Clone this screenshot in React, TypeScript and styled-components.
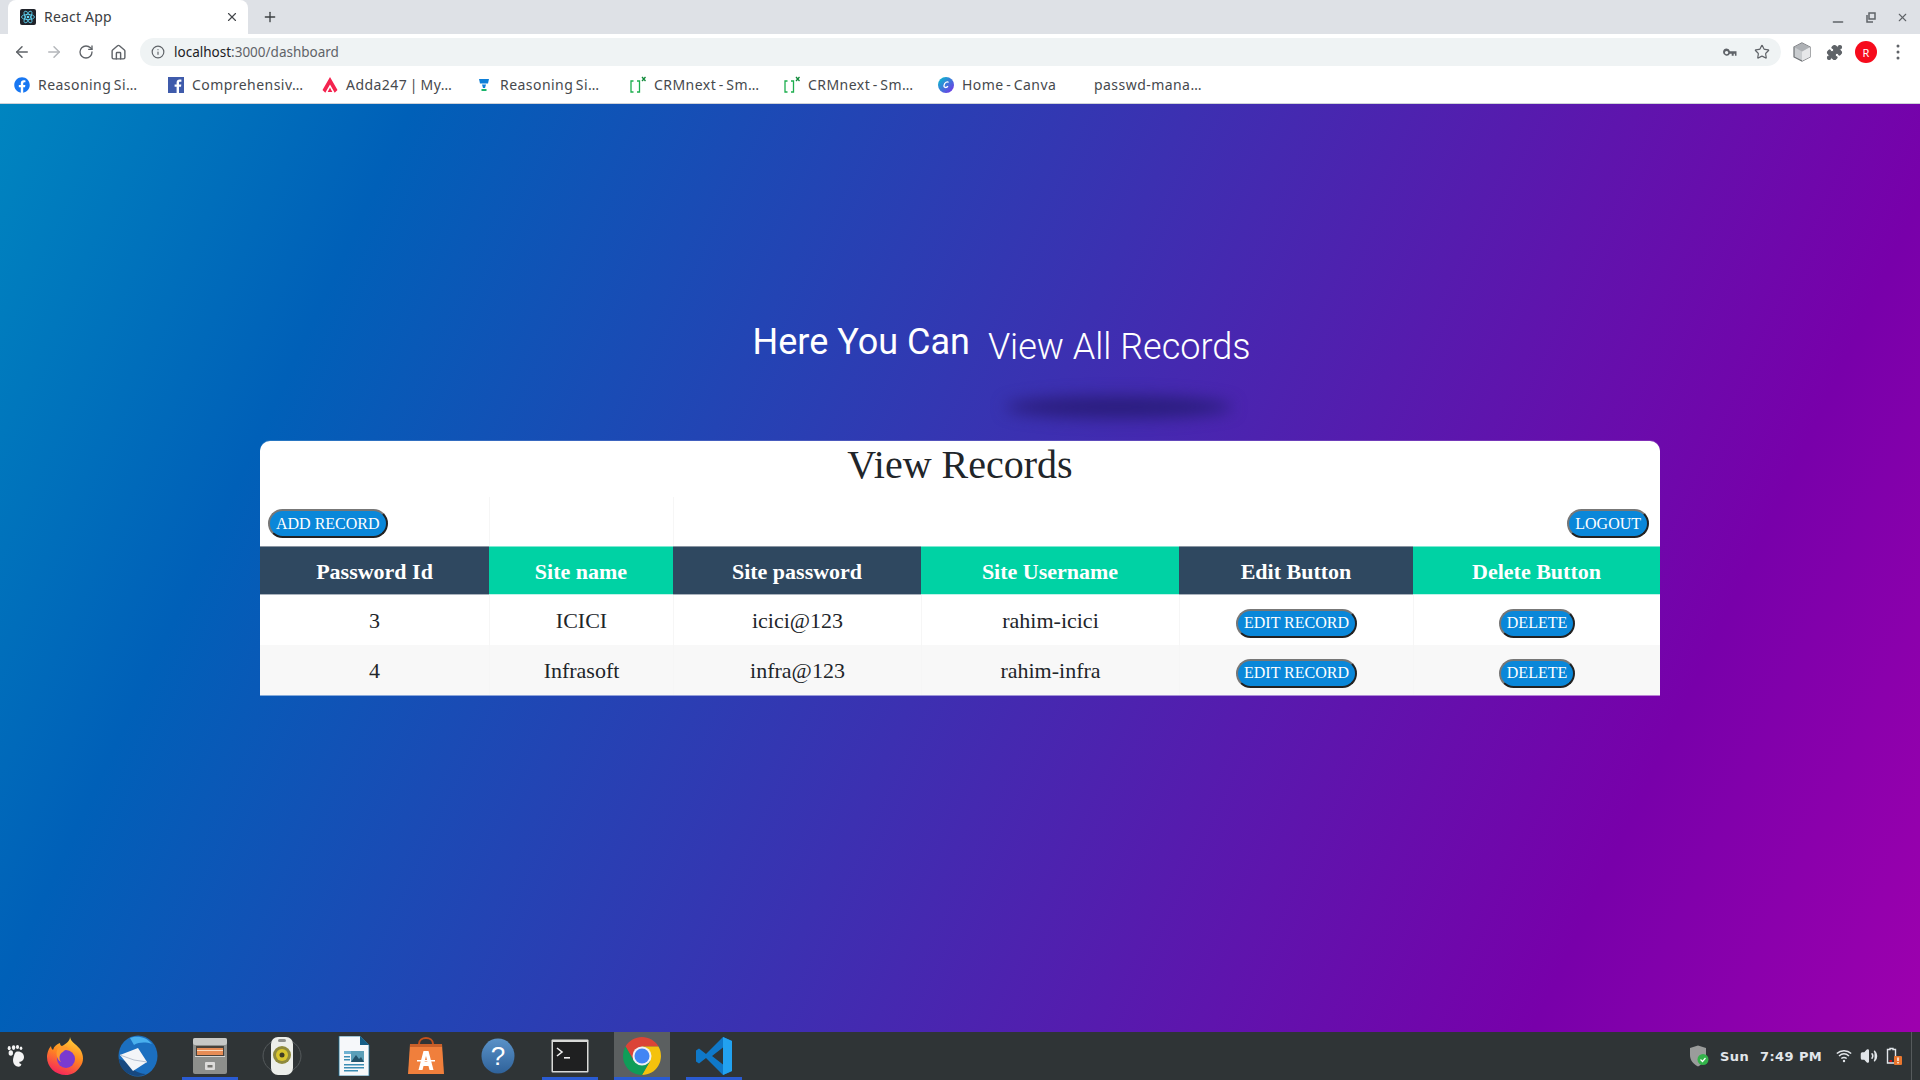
import React from 'react';
import styled, { createGlobalStyle } from 'styled-components';
import { ArrowLeft, ArrowRight, RotateCw, Home, Info, Star, Plus, X, Minus, Puzzle, Volume2 } from 'lucide-react';
import { FaFacebook } from 'react-icons/fa';

const GlobalStyle = createGlobalStyle`
    html, body {
        margin: 0;
        height: 100%;
        overflow: hidden;
    }
    #root {
        height: 100%;
    }
`;

const Screen = styled.div`
    display: flex;
    flex-direction: column;
    height: 1080px;
    font-family: "Liberation Serif", serif;
`;

// <BROWSER>
const TabStrip = styled.div`
    display: flex;
    align-items: flex-end;
    height: 34px;
    padding-left: 8px;
    background: #dee1e6;
    font-family: "Noto Sans", sans-serif;
`;

const Tab = styled.div`
    display: flex;
    align-items: center;
    gap: 8px;
    width: 240px;
    height: 34px;
    box-sizing: border-box;
    padding: 0 9px 0 12px;
    background: #fff;
    border-radius: 8px 8px 0 0;
    color: #3c4043;
    font-size: 14px;
    letter-spacing: 0.2px;

    & > span {
        flex: 1;
        padding-bottom: 2px;
    }
`;

const NewTab = styled.div`
    display: flex;
    justify-content: center;
    width: 28px;
    height: 34px;
    align-items: center;
    margin-left: 8px;
    color: #3c4043;
`;

const WindowControls = styled.div`
    display: flex;
    align-items: center;
    gap: 20px;
    height: 34px;
    margin-left: auto;
    padding-right: 11px;
    color: #5f6368;
`;

const Toolbar = styled.div`
    display: flex;
    align-items: flex-end;
    height: 32px;
    padding: 0 6px;
    background: #fff;
`;

const ToolButton = styled.div<{ $muted?: boolean }>`
    display: flex;
    align-items: center;
    justify-content: center;
    flex: none;
    width: 32px;
    height: 28px;
    color: ${({ $muted }) => ($muted ? '#b4b7bb' : '#5f6368')};
`;

const Omnibox = styled.div`
    display: flex;
    align-items: center;
    flex: 1;
    height: 28px;
    margin: 0 5px 0 6px;
    padding: 0 11px 0 11px;
    background: #eff3f4;
    border-radius: 14px;
    color: #5f6368;
`;

const Address = styled.div`
    flex: 1;
    margin-left: 9px;
    font: 13.5px "Noto Sans", sans-serif;
    color: #5f6368;

    & > b {
        font-weight: 400;
        color: #202124;
    }
`;

const Avatar = styled.div`
    display: flex;
    align-items: center;
    justify-content: center;
    width: 22px;
    height: 22px;
    border-radius: 50%;
    background: #f60b1c;
    color: #fff;
    font: 11px "Noto Sans", sans-serif;
`;

const Bookmarks = styled.div`
    display: flex;
    align-items: center;
    height: 37px;
    padding-left: 14px;
    background: #fff;
    border-bottom: 1px solid #cfd2d8;
    box-sizing: content-box;
    font: 14px "Noto Sans", sans-serif;
    letter-spacing: 0.45px;
    word-spacing: -1.5px;
    color: #46494d;
`;

const Bookmark = styled.div<{ $width?: number }>`
    display: flex;
    align-items: center;
    gap: 8px;
    flex: none;
    width: ${({ $width }) => $width ?? 154}px;
    white-space: nowrap;
`;
// </BROWSER>

// <PAGE>
const Page = styled.main`
    flex: 1;
    display: flex;
    flex-direction: column;
    min-height: 0;
    background: linear-gradient(115deg, #0085c0 0%, #0060b8 17.6%, #7800aa 83.5%, #9e00ae 100%);
`;

const Hero = styled.div`
    display: flex;
    align-items: flex-start;
    justify-content: center;
    gap: 18px;
    padding: 217px 0 0 83px;
    height: 337px;
    box-sizing: border-box;
    font-family: Roboto, sans-serif;
    font-size: 36px;
    line-height: 42px;
    color: #fff;
`;

const HeroLead = styled.div`
    font-weight: 400;
`;

const HeroTyped = styled.div`
    display: flex;
    flex-direction: column;
    align-items: center;
    padding-top: 5px;
    font-weight: 300;
`;

const HeroShadow = styled.div`
    width: 226px;
    height: 22px;
    margin-top: 28px;
    border-radius: 50%;
    background: #2a1d7c;
    filter: blur(8px);
`;

const Card = styled.section`
    align-self: center;
    width: 1400px;
    background: #fff;
    border-radius: 10px 10px 0 0;
    box-shadow: 0 1px 0 rgba(255, 255, 255, 0.5), 0 -1px 0 rgba(255, 255, 255, 0.15);
`;

const CardTitle = styled.h2`
    margin: 0 0 8px;
    font-size: 40px;
    font-weight: 400;
    line-height: 48px;
    text-align: center;
    color: #212529;
`;

const Table = styled.table`
    width: 100%;
    table-layout: fixed;
    border-collapse: separate;
    border-spacing: 0;
    font-size: 22px;
    line-height: 33px;
    color: #212529;
`;

const Column = styled.col<{ $width: number }>`
    width: ${({ $width }) => $width}px;
`;

const ActionCell = styled.td<{ $right?: boolean }>`
    height: 49px;
    box-sizing: border-box;
    padding: 0 ${({ $right }) => ($right ? '11px' : '8px')};
    text-align: ${({ $right }) => ($right ? 'right' : 'left')};
    vertical-align: middle;
    border-left: 1px solid #f6f6f6;

    &:first-child {
        border-left: 0;
    }

    & > button {
        top: 0;
    }
`;

const HeadCell = styled.th<{ $green?: boolean }>`
    height: 49px;
    box-sizing: border-box;
    padding: 1px 8px 0;
    font-weight: 700;
    color: #fff;
    background: ${({ $green }) => ($green ? '#00d2a4' : '#2f4860')};
    border-top: 1px solid ${({ $green }) => ($green ? '#7fe8d1' : '#8a95a2')};
    border-bottom: 1px solid ${({ $green }) => ($green ? '#c0f3e8' : '#aab3bd')};
`;

const Row = styled.tr<{ $shaded?: boolean }>`
    background: ${({ $shaded }) => ($shaded ? '#f8f8f8' : '#fff')};
`;

const Cell = styled.td`
    height: 50px;
    box-sizing: border-box;
    padding: 0 8px;
    text-align: center;
    vertical-align: middle;
    border-left: 1px solid #f6f6f6;

    &:first-child {
        border-left: 0;
    }
`;

const PillButton = styled.button`
    position: relative;
    top: 1px;
    height: 29px;
    box-sizing: border-box;
    padding: 0 6px;
    border: 2px solid;
    border-color: #777 #222 #222 #777;
    border-radius: 15px;
    background: #0a87d9;
    color: #fff;
    font-family: "Liberation Serif", serif;
    font-size: 16px;
    line-height: 24px;
    vertical-align: middle;
`;
// </PAGE>

// <DOCK>
const Taskbar = styled.footer`
    display: flex;
    align-items: stretch;
    flex: none;
    height: 48px;
    background: #2f3436;
    color: #e2e6ea;
`;

const Foot = styled.div`
    display: flex;
    align-items: center;
    justify-content: center;
    flex: none;
    width: 32px;
    margin-right: -2px;
`;

const DockSlot = styled.div`
    display: flex;
    justify-content: center;
    flex: none;
    width: 72px;
`;

const DockButton = styled.div<{ $active?: boolean; $running?: boolean }>`
    display: flex;
    align-items: center;
    justify-content: center;
    width: 56px;
    box-sizing: border-box;
    background: ${({ $active }) => ($active ? '#5b5f60' : 'transparent')};
    border-bottom: 3px solid ${({ $running }) => ($running ? '#2a5bd2' : 'transparent')};
    padding-top: 3px;
`;

const Tray = styled.div`
    display: flex;
    align-items: center;
    margin-left: auto;
    width: 231px;
    box-sizing: border-box;
    padding-left: 8px;
    border-right: 1px solid #565a5c;
    margin-right: 8px;
    font: 700 13px "DejaVu Sans", sans-serif;
    letter-spacing: 0.4px;
`;

const TrayText = styled.span<{ $gap: number }>`
    margin-left: ${({ $gap }) => $gap}px;
    white-space: nowrap;
`;

const TrayIcon = styled.div<{ $gap: number }>`
    display: flex;
    margin-left: ${({ $gap }) => $gap}px;
`;
// </DOCK>

const ReactFavicon = () => (
    <svg width="16" height="16" viewBox="0 0 16 16">
        <rect width="16" height="16" rx="2" fill="#20232a" />
        <g fill="none" stroke="#61dafb" strokeWidth="0.8">
            <ellipse cx="8" cy="8" rx="6.5" ry="2.6" />
            <ellipse cx="8" cy="8" rx="6.5" ry="2.6" transform="rotate(60 8 8)" />
            <ellipse cx="8" cy="8" rx="6.5" ry="2.6" transform="rotate(120 8 8)" />
        </g>
        <circle cx="8" cy="8" r="1.3" fill="#61dafb" />
    </svg>
);

const KeyIcon = () => (
    <svg width="14" height="9" viewBox="0 0 14 9" fill="#5f6368">
        <path fillRule="evenodd" d="M3.600 0.500a3.600 3.600 0 1 0 3.300 5.200h1.800v2h2v-2h1.200v2h1.600V3.300H6.900a3.600 3.600 0 0 0-3.300-2.800zM3.600 2.900a1.700 1.700 0 1 1 0 3.400a1.700 1.700 0 0 1 0-3.400z" />
    </svg>
);

const ExtensionCube = () => (
    <svg width="18" height="20" viewBox="0 0 18 20">
        <path d="M9 1l8 4v10l-8 4-8-4V5z" fill="#c9cccf" stroke="#6d7074" strokeWidth="1.200" />
        <path d="M9 9.500V19l8-4V5z" fill="#e6e7e9" />
        <path d="M9 9.500L1 5l8-4 8 4z" fill="#aeb1b5" />
    </svg>
);

const RestoreIcon = () => (
    <svg width="10" height="11" viewBox="0 0 10 11" fill="none" stroke="#5f6368" strokeWidth="1.500">
        <path d="M3 1h6v6H3z" />
        <path d="M1 3v7h6" />
    </svg>
);

const Dots = () => (
    <svg width="4" height="16" viewBox="0 0 4 16" fill="#5f6368">
        <circle cx="2" cy="2" r="1.500" />
        <circle cx="2" cy="8" r="1.500" />
        <circle cx="2" cy="14" r="1.500" />
    </svg>
);

const FacebookSquare = () => (
    <svg width="16" height="16" viewBox="0 0 16 16">
        <rect width="16" height="16" fill="#3f5bab" />
        <path d="M11 16V9.800h2l.3-2.400H11V6c0-.7.2-1.200 1.200-1.200h1.200V2.600c-.4 0-1-.1-1.800-.1-1.800 0-3 1.100-3 3.100v1.800h-2v2.400h2V16z" fill="#fff" />
    </svg>
);

const AddaIcon = () => (
    <svg width="16" height="16" viewBox="0 0 16 16" fill="#f4234f">
        <path d="M8 0l7.500 13-2.800 2.800L8 7.500 3.300 15.800 0.500 13z" />
        <path d="M8 10.500l2.300 4.500H5.700z" />
    </svg>
);

const TestIcon = () => (
    <svg width="16" height="16" viewBox="0 0 16 16">
        <path d="M3 2h10l-1 4.500H4z" fill="#0e7fd8" />
        <path d="M6 7.500h4L9 11H7z" fill="#0e7fd8" />
        <rect x="5.500" y="12" width="5" height="2" fill="#19b46a" />
    </svg>
);

const CrmIcon = () => (
    <svg width="16" height="18" viewBox="0 0 16 18" fill="none" stroke="#1cae4e" strokeWidth="1.300">
        <path d="M3.500 5H1v11h2.500" />
        <path d="M7 5h2.500v11H7" />
        <path d="M12 1l3.500 4M15.500 1L12 5" stroke="#108a3a" />
    </svg>
);

const CanvaIcon = () => (
    <svg width="16" height="16" viewBox="0 0 16 16">
        <defs>
            <linearGradient id="canva" x1="0" y1="0" x2="1" y2="1">
                <stop offset="0" stopColor="#00c4cc" />
                <stop offset="1" stopColor="#7d2ae8" />
            </linearGradient>
        </defs>
        <circle cx="8" cy="8" r="8" fill="url(#canva)" />
        <path d="M10.500 5.500C9.500 4 6.500 5.500 6 8.500c-.3 2.500 2.500 2.500 4 .8" fill="none" stroke="#fff" strokeWidth="1.300" />
    </svg>
);

const GnomeFoot = () => (
    <svg width="18" height="24" viewBox="0 0 18 24" fill="#f4f4f4">
        <path d="M10 7.500c4-.5 7 2 7 5.500 0 3-2.200 4.800-4.500 4.800-.6 1.500.7 2.200 1.800 2.200.3 2-2.300 3.500-4.800 2.300-3.500-1.700-4-6-3-9 .7-2.500 1.500-5.500 3.500-5.800z" />
        <ellipse cx="3.800" cy="9" rx="2.200" ry="2.800" />
        <ellipse cx="2.200" cy="4.200" rx="1.500" ry="2.100" />
        <ellipse cx="6.600" cy="3.600" rx="1.700" ry="2.400" />
        <ellipse cx="10.500" cy="3" rx="1.600" ry="2.100" />
        <ellipse cx="14" cy="4.300" rx="1.300" ry="1.700" />
    </svg>
);

const Firefox = () => (
    <svg width="40" height="40" viewBox="0 0 40 40">
        <defs>
            <linearGradient id="fx" x1="0.7" y1="0" x2="0.3" y2="1">
                <stop offset="0" stopColor="#ffd33d" />
                <stop offset="0.45" stopColor="#ff8a1f" />
                <stop offset="1" stopColor="#f5215e" />
            </linearGradient>
        </defs>
        <path d="M24 1c1 5 5 6 10 12 4 6 4 13 0 18-4 6-9 8-14 8C9 39 1 31 1 21c0-4 2-9 4-11 0 2 1 3 2 4 1-4 4-6 7-7 0 2 1 3 2 3 4-2 8-5 8-9z" fill="url(#fx)" />
        <circle cx="20" cy="23" r="9" fill="#7a3ad0" />
        <path d="M12 12c4-3 9-2 11 1-3 0-5 1-6 3-3 1-5 6-2 10-4-2-6-9-3-14z" fill="#ff9a2e" />
    </svg>
);

const Thunderbird = () => (
    <svg width="40" height="42" viewBox="0 0 40 42">
        <ellipse cx="20" cy="21" rx="19.500" ry="20.500" fill="#1b6fc0" />
        <path d="M1 24c0 9 8 17 19 17 3 0 6-.7 8-2-8 0-15-5-18-12z" fill="#17487f" />
        <path d="M12 3c7-3 17-1 22 6-6-2-13-2-18 1z" fill="#49b0ee" />
        <path d="M2 20l18-7 9 14-14 9z" fill="#f3f5f8" />
        <path d="M2 20l14 5 13 2" fill="none" stroke="#b7c1cf" strokeWidth="1" />
    </svg>
);

const FileCabinet = () => (
    <svg width="36" height="38" viewBox="0 0 36 38">
        <rect x="1" y="1" width="34" height="36" rx="2" fill="#8d8f8c" />
        <rect x="1" y="1" width="34" height="7" rx="2" fill="#c7c8c6" />
        <rect x="4" y="9" width="28" height="10" fill="#47423c" />
        <rect x="5" y="11" width="26" height="7" fill="#e68c55" />
        <rect x="5" y="13" width="26" height="1" fill="#f8d9bd" />
        <rect x="3" y="19" width="30" height="1" fill="#d8d8d6" />
        <rect x="13" y="25" width="10" height="8" rx="1" fill="#dcdcda" />
        <rect x="15.500" y="28" width="5" height="2.500" fill="#74746f" />
    </svg>
);

const Speaker = () => (
    <svg width="40" height="40" viewBox="0 0 40 40">
        <ellipse cx="20" cy="20" rx="19" ry="17" fill="none" stroke="#555a5c" strokeWidth="1" />
        <rect x="9" y="1" width="22" height="38" rx="7" fill="#eceeea" />
        <circle cx="20" cy="19" r="9" fill="#8f8a3c" />
        <circle cx="20" cy="19" r="6" fill="#d8c52e" />
        <circle cx="20" cy="19" r="2.500" fill="#3f3d24" />
        <rect x="16" y="3" width="8" height="3" rx="1.500" fill="#8d8f8c" />
    </svg>
);

const WriterDoc = () => (
    <svg width="32" height="40" viewBox="0 0 32 40">
        <path d="M1 0h21l9 9v31H1z" fill="#f6f8fa" stroke="#1c6e96" strokeWidth="0.800" />
        <path d="M22 0l9 9h-9z" fill="#155e86" />
        <rect x="6" y="15" width="20" height="3" fill="#6fb2d2" />
        <rect x="13" y="15" width="13" height="11" fill="#5a9fb8" />
        <path d="M13 26l5-7 3 4 2-2 3 5z" fill="#23536a" />
        <rect x="6" y="20" width="6" height="1.500" fill="#3a8db4" />
        <rect x="6" y="23" width="6" height="1.500" fill="#3a8db4" />
        <rect x="6" y="28" width="20" height="1.500" fill="#3a8db4" />
        <rect x="6" y="31" width="20" height="1.500" fill="#3a8db4" />
        <rect x="6" y="34" width="14" height="1.500" fill="#3a8db4" />
    </svg>
);

const SoftwareBag = () => (
    <svg width="36" height="38" viewBox="0 0 36 38">
        <path d="M11 7c0-8 14-8 14 0" fill="none" stroke="#c4501c" strokeWidth="2" />
        <path d="M2 7h32l2 30H0z" fill="#f07f3c" />
        <rect x="2" y="7" width="32" height="3" fill="#c9602a" />
        <path d="M15.500 14h5l5 19h-4l-1-4h-5l-1 4h-4zM16.500 25h3l-1.500-6z" fill="#fff" fillRule="evenodd" />
        <rect x="9" y="23" width="18" height="1.500" fill="#fff" />
    </svg>
);

const HelpBubble = () => (
    <svg width="34" height="36" viewBox="0 0 34 36">
        <defs>
            <linearGradient id="help" x1="0" y1="0" x2="0" y2="1">
                <stop offset="0" stopColor="#5a92c8" />
                <stop offset="1" stopColor="#2f629a" />
            </linearGradient>
        </defs>
        <ellipse cx="17" cy="18" rx="16.500" ry="17.500" fill="url(#help)" />
        <text x="17" y="27" textAnchor="middle" fill="#fff" fontFamily="'Liberation Sans', sans-serif" fontWeight="400" fontSize="26">?</text>
    </svg>
);

const TerminalIcon = () => (
    <svg width="38" height="34" viewBox="0 0 38 34">
        <rect x="0.500" y="0.500" width="37" height="33" rx="1" fill="#d9dad8" />
        <rect x="2" y="3" width="34" height="29" fill="#1f2021" />
        <path d="M6 9l5 4-5 4" fill="none" stroke="#f2f2f2" strokeWidth="1.600" />
        <rect x="13" y="18" width="6" height="1.600" fill="#f2f2f2" />
    </svg>
);

const ChromeLogo = () => (
    <svg width="40" height="40" viewBox="0 0 40 40">
        <path d="M20 10.500L36.450 10.500A19 19 0 0 0 3.550 10.500L11.770 24.750Z" fill="#db4437" />
        <path d="M28.230 24.750L20 39A19 19 0 0 0 36.450 10.500L20 10.500Z" fill="#f4c20d" />
        <path d="M11.770 24.750L3.550 10.500A19 19 0 0 0 20 39L28.230 24.750Z" fill="#0f9d58" />
        <circle cx="20" cy="20" r="9.500" fill="#f1f1f1" />
        <circle cx="20" cy="20" r="7.500" fill="#4285f4" />
    </svg>
);

const VsCode = () => (
    <svg width="38" height="40" viewBox="0 0 38 40">
        <path d="M28 1L11 18 4 12.500 1 14.500v11L4 27.500 11 22 28 39l9-4V5zM28 11.500v17L17 20z" fill="#0f78c8" fillRule="evenodd" />
        <path d="M28 1l9 4v30l-9 4z" fill="#22a2f0" />
    </svg>
);

const Shield = () => (
    <svg width="20" height="22" viewBox="0 0 20 22">
        <path d="M9 0.500l8 2.500v7c0 5-3 9-8 11.500C4 19 1 15 1 10V3z" fill="#9a9c9b" />
        <circle cx="14" cy="14.500" r="5.500" fill="#33b34a" />
        <path d="M11.500 14.500l2 2 3-3.500" fill="none" stroke="#fff" strokeWidth="1.200" />
    </svg>
);

const Wifi = () => (
    <svg width="16" height="14" viewBox="0 0 16 14" fill="none" stroke="#e2e6ea" strokeWidth="1.500">
        <path d="M0.800 4.500c4-3.600 10.400-3.600 14.400 0" />
        <path d="M3 7c3-2.600 7-2.600 10 0" />
        <path d="M5.300 9.500c1.600-1.300 3.800-1.300 5.400 0" />
        <circle cx="8" cy="12" r="1.200" fill="#e2e6ea" stroke="none" />
    </svg>
);

const Battery = () => (
    <svg width="16" height="18" viewBox="0 0 16 18">
        <path d="M4 1.500h3v1h2.500v13.500H1.500V2.500H4z" fill="none" stroke="#e2e6ea" strokeWidth="1.400" />
        <rect x="3.500" y="13" width="2.500" height="2" fill="#c11" />
        <rect x="8" y="9" width="8" height="9" rx="1" fill="#e9762e" />
        <rect x="11.300" y="10.500" width="1.400" height="3.500" fill="#fff" />
        <rect x="11.300" y="15" width="1.400" height="1.400" fill="#fff" />
    </svg>
);

const bookmarks = [
    { icon: <FaFacebook size={16} color="#1877f2" />, label: 'Reasoning Si…' },
    { icon: <FacebookSquare />, label: 'Comprehensiv…' },
    { icon: <AddaIcon />, label: 'Adda247 | My…' },
    { icon: <TestIcon />, label: 'Reasoning Si…' },
    { icon: <CrmIcon />, label: 'CRMnext - Sm…' },
    { icon: <CrmIcon />, label: 'CRMnext - Sm…' },
    { icon: <CanvaIcon />, label: 'Home - Canva', width: 156 },
    { label: 'passwd-mana…' },
];

const dock = [
    { icon: <Firefox /> },
    { icon: <Thunderbird /> },
    { icon: <FileCabinet />, running: true },
    { icon: <Speaker /> },
    { icon: <WriterDoc /> },
    { icon: <SoftwareBag /> },
    { icon: <HelpBubble /> },
    { icon: <TerminalIcon />, running: true },
    { icon: <ChromeLogo />, running: true, active: true },
    { icon: <VsCode />, running: true },
];

const records = [
    { id: 3, site: 'ICICI', password: 'icici@123', username: 'rahim-icici' },
    { id: 4, site: 'Infrasoft', password: 'infra@123', username: 'rahim-infra' },
];

const columns = [229, 184, 248, 258, 234, 247];

export default function App() {
    return (
        <Screen>
            <GlobalStyle />
            <TabStrip>
                <Tab>
                    <ReactFavicon />
                    <span>React App</span>
                    <X size={14} strokeWidth={2} color="#45484c" />
                </Tab>
                <NewTab>
                    <Plus size={16} strokeWidth={2} />
                </NewTab>
                <WindowControls>
                    <Minus size={16} strokeWidth={2} style={{ marginTop: 10 }} />
                    <RestoreIcon />
                    <X size={13} strokeWidth={2} />
                </WindowControls>
            </TabStrip>
            <Toolbar>
                <ToolButton><ArrowLeft size={18} strokeWidth={2} /></ToolButton>
                <ToolButton $muted><ArrowRight size={18} strokeWidth={2} /></ToolButton>
                <ToolButton><RotateCw size={16} strokeWidth={2} /></ToolButton>
                <ToolButton><Home size={17} strokeWidth={2} /></ToolButton>
                <Omnibox>
                    <Info size={14} strokeWidth={2} />
                    <Address><b>localhost</b>:3000/dashboard</Address>
                    <KeyIcon />
                    <Star size={16} strokeWidth={1.8} style={{ marginLeft: 17 }} />
                </Omnibox>
                <ToolButton><ExtensionCube /></ToolButton>
                <ToolButton><Puzzle size={17} fill="#5f6368" strokeWidth={1.500} /></ToolButton>
                <ToolButton><Avatar>R</Avatar></ToolButton>
                <ToolButton><Dots /></ToolButton>
            </Toolbar>
            <Bookmarks>
                {bookmarks.map((item, i) => (
                    <Bookmark key={i} $width={item.width}>
                        {item.icon}
                        {item.label}
                    </Bookmark>
                ))}
            </Bookmarks>
            <Page>
                <Hero>
                    <HeroLead>Here You Can</HeroLead>
                    <HeroTyped>
                        View All Records
                        <HeroShadow />
                    </HeroTyped>
                </Hero>
                <Card>
                    <CardTitle>View Records</CardTitle>
                    <Table>
                        <colgroup>
                            {columns.map((width, i) => <Column key={i} $width={width} />)}
                        </colgroup>
                        <tbody>
                            <tr>
                                <ActionCell><PillButton>ADD RECORD</PillButton></ActionCell>
                                <ActionCell />
                                <ActionCell colSpan={4} $right><PillButton>LOGOUT</PillButton></ActionCell>
                            </tr>
                            <tr>
                                <HeadCell>Password Id</HeadCell>
                                <HeadCell $green>Site name</HeadCell>
                                <HeadCell>Site password</HeadCell>
                                <HeadCell $green>Site Username</HeadCell>
                                <HeadCell>Edit Button</HeadCell>
                                <HeadCell $green>Delete Button</HeadCell>
                            </tr>
                            {records.map((record, i) => (
                                <Row key={record.id} $shaded={i % 2 === 1}>
                                    <Cell>{record.id}</Cell>
                                    <Cell>{record.site}</Cell>
                                    <Cell>{record.password}</Cell>
                                    <Cell>{record.username}</Cell>
                                    <Cell><PillButton>EDIT RECORD</PillButton></Cell>
                                    <Cell><PillButton>DELETE</PillButton></Cell>
                                </Row>
                            ))}
                        </tbody>
                    </Table>
                </Card>
            </Page>
            <Taskbar>
                <Foot><GnomeFoot /></Foot>
                {dock.map((item, i) => (
                    <DockSlot key={i}>
                        <DockButton $active={item.active} $running={item.running}>{item.icon}</DockButton>
                    </DockSlot>
                ))}
                <Tray>
                    <Shield />
                    <TrayText $gap={11}>Sun</TrayText>
                    <TrayText $gap={11}>7:49 PM</TrayText>
                    <TrayIcon $gap={14}><Wifi /></TrayIcon>
                    <TrayIcon $gap={8}><Volume2 size={18} color="#e2e6ea" fill="#e2e6ea" /></TrayIcon>
                    <TrayIcon $gap={8}><Battery /></TrayIcon>
                </Tray>
            </Taskbar>
        </Screen>
    );
}
